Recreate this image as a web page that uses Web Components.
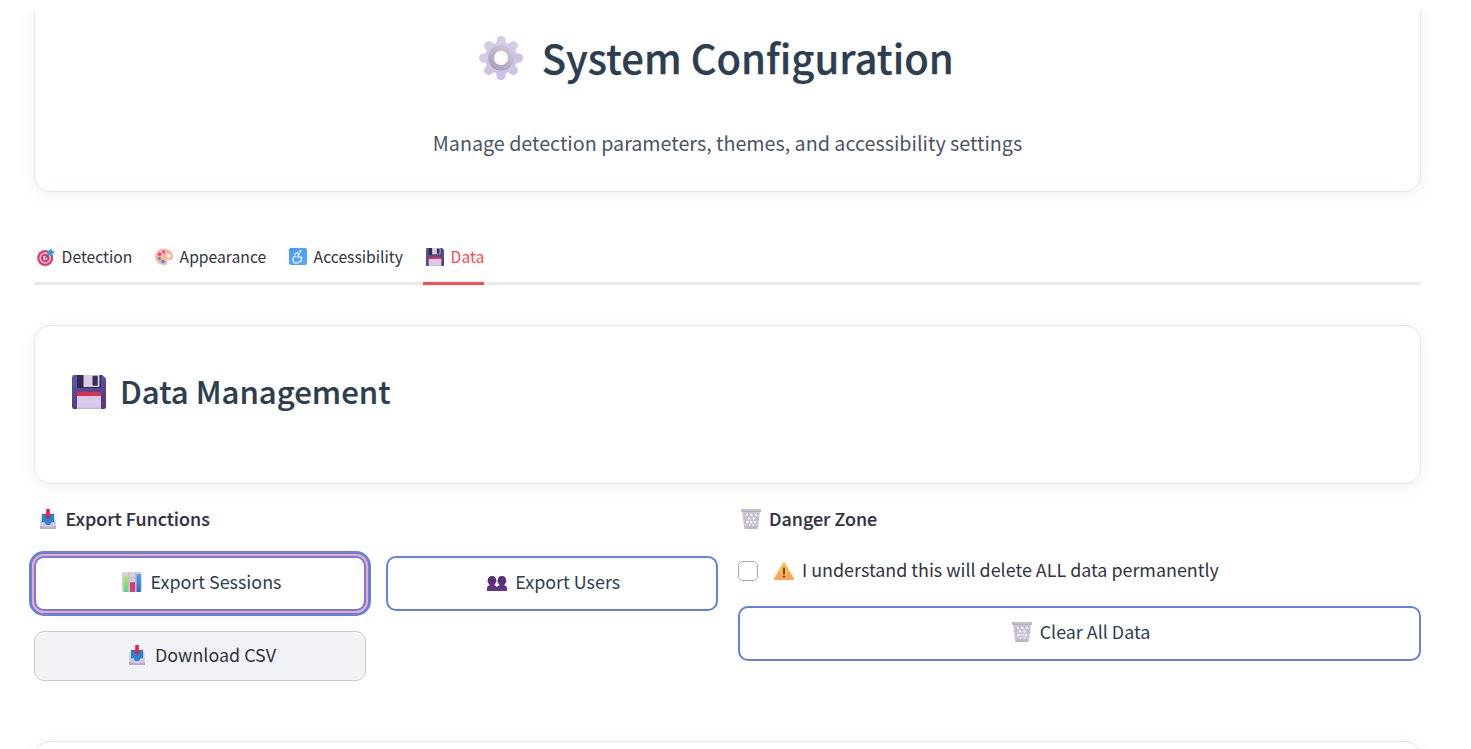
<!DOCTYPE html>
<html lang="en">
<head>
<meta charset="utf-8">
<title>System Configuration</title>
<style>
html,body{margin:0;height:100%;overflow:hidden;background:#fff}
body{font-family:"Noto Sans CJK SC","Noto Sans",sans-serif;color:#31333f}
</style>
</head>
<body>
<settings-page></settings-page>
<script>
const define=(name,html,setup)=>customElements.define(name,class extends HTMLElement{
  constructor(){
    super();
    const t=document.createElement('template');t.innerHTML=html;
    this.attachShadow({mode:'open'}).append(t.content.cloneNode(true));
  }
  connectedCallback(){if(setup)setup(this,this.shadowRoot)}
});

const icons={
gear:`<defs><linearGradient id="a" gradientUnits="userSpaceOnUse" x1="8" y1="4" x2="36" y2="42"><stop stop-color="#d9d0e6"/><stop offset="1" stop-color="#cbbde3"/></linearGradient><linearGradient id="b" gradientUnits="userSpaceOnUse" x1="30" y1="10" x2="14" y2="34"><stop stop-color="#d0c8d9"/><stop offset="1" stop-color="#aa9eb8"/></linearGradient></defs>
<g fill="url(#a)"><circle cx="22" cy="22" r="16"/><path d="M17.500 4Q18 0 22 0t4.500 4L28 14H16zM17.500 40Q18 44 22 44t4.500-4L28 30H16zM4 17.500Q0 18 0 22t4 4.500L14 28V16zM40 17.500Q44 18 44 22t-4 4.500L30 28V16z"/><path transform="rotate(45 22 22)" d="M17.500 4Q18 0 22 0t4.500 4L28 14H16zM17.500 40Q18 44 22 44t4.500-4L28 30H16zM4 17.500Q0 18 0 22t4 4.500L14 28V16zM40 17.500Q44 18 44 22t-4 4.500L30 28V16z"/></g>
<circle cx="22" cy="22" r="9.800" fill="none" stroke="url(#b)" stroke-width="5.800"/><circle cx="22" cy="22" r="7" fill="#fff"/>`,
target:`<circle cx="8.2" cy="10" r="8" fill="#e2386c"/><circle cx="8.2" cy="10" r="5.8" fill="#e7c9df"/><circle cx="8.2" cy="10" r="4.3" fill="#dc376b"/><circle cx="8.2" cy="10" r="2.3" fill="#ecc8dc"/><path d="M8 10.300l5-5" stroke="#345f9d" stroke-width="1.200"/><path d="M10.300 7.500L10.600 3.600 14.400.2l.5 2.600 3.100.6-3.600 3.900z" fill="#38a3ed"/><path d="M11.500 6.500l3.500-3.500" stroke="#1976c5" stroke-width=".7"/>`,
palette:`<path d="M8 .8C14 0 18 4 18 8.2c0 3.3-1.7 4.4-4.1 3.7-2-.6-2.7.5-2.1 2 .8 2-.2 3.2-2.1 3.1C4.2 16.8 0 13.4.2 8.6.3 4.5 3.4 1.3 8 .8z" fill="#ffb59c"/><circle cx="13.600" cy="7.800" r="1.900" fill="#fff"/><circle cx="8.700" cy="3.800" r="1.600" fill="#b653ee"/><circle cx="4.600" cy="6.200" r="1.600" fill="#ed3974"/><circle cx="4.400" cy="10.400" r="1.600" fill="#38afa9"/><circle cx="8" cy="13.500" r="1.700" fill="#388ee8"/>`,
access:`<defs><linearGradient id="a" x2=".5" y2="1"><stop stop-color="#4b99f4"/><stop offset="1" stop-color="#54a6ff"/></linearGradient></defs><rect width="18" height="17" rx="1.7" fill="url(#a)"/><g fill="none" stroke="#e7f4ff" stroke-width="1.300" stroke-linecap="round" stroke-linejoin="round"><circle cx="11.300" cy="3.300" r=".7" fill="#fff"/><path d="M5.500 6.500l2-1.700 2.800 1-1.800 3.300h4.200l-.8 4.400M6.800 8.200a3.500 3.500 0 1 0 3.600 5.200"/></g>`,
floppy:`<defs><linearGradient id="a" x2=".3" y2="1"><stop stop-color="#535fa8"/><stop offset="1" stop-color="#593978"/></linearGradient><linearGradient id="b" x2="1"><stop stop-color="#ef263c"/><stop offset="1" stop-color="#cf3768"/></linearGradient></defs><path d="M2 0h28.500L34 3.500V32a2 2 0 0 1-2 2H2a2 2 0 0 1-2-2V2a2 2 0 0 1 2-2z" fill="url(#a)"/><path d="M5 0h24v11.500a1.500 1.500 0 0 1-1.500 1.500h-21A1.500 1.500 0 0 1 5 11.500z" fill="#352758"/><path d="M11.500 0h16v12h-16z" fill="#d8cde0"/><rect x="20.500" y=".8" width="5.200" height="10" rx="1" fill="#3a285f"/><path d="M5 20h24v14H5z" fill="#d9c9e8"/><path d="M5 18.500q0-1.500 1.500-1.500h21q1.500 0 1.500 1.500V21H5z" fill="url(#b)"/><path d="M6 33.300h22" stroke="#c1a7d8"/>`,
inbox:`<path d="M1.700 4h12.600L16 14v5.500a.5.5 0 0 1-.5.500H.500a.5.500 0 0 1-.5-.5V14z" fill="#d5cee0"/><path d="M2 5h12v8.200h-2.600L10 16H6l-1.400-2.800H2z" fill="#2585d7"/><path d="M0 17.200l5 .3 1 .9h4l1-.9 5-.3V20H0z" fill="#bca6d2"/><path d="M6.200 0h3.600v6h2L8 10.500 4.200 6h2z" fill="#dd244e"/>`,
chart:`<defs><linearGradient id="a" x2="0" y2="1"><stop stop-color="#a9ed55"/><stop offset="1" stop-color="#53d794"/></linearGradient><linearGradient id="b" x2="0" y2="1"><stop stop-color="#43a6f0"/><stop offset="1" stop-color="#286bbd"/></linearGradient></defs><rect width="20" height="20" rx="1.800" fill="#d8cde1"/><path d="M0 6h20M0 13h20M7 0v20M13.500 0v20" stroke="#b9adc5" stroke-width=".7"/><path d="M1.800 4.500h4.400V20H1.800z" fill="url(#a)"/><path d="M8 10.300h5V20H8z" fill="#dc3974"/><path d="M14.500 2h4.200V20h-4.200z" fill="url(#b)"/>`,
users:`<defs><linearGradient id="a" x2="0" y2="1"><stop stop-color="#55306a"/><stop offset="1" stop-color="#63318f"/></linearGradient></defs><g fill="url(#a)"><path d="M5 0C8 0 9.300 1.700 9 4c.7.100.7 2.200-.2 2.500C8.400 8 7.600 8.500 7 9.200c1.800.3 3.200 1.300 3.200 2.800v3H0v-3c0-1.500 1.200-2.500 3-2.800C2.400 8.500 1.600 8 1.200 6.500.300 6.200.300 4.100 1 4 .7 1.700 2 0 5 0z"/><path transform="translate(9.900)" d="M5 0C8 0 9.300 1.700 9 4c.7.100.7 2.200-.2 2.500C8.400 8 7.600 8.500 7 9.200c1.800.3 3.100 1.300 3.100 2.800v3H0v-3c0-1.500 1.200-2.500 3-2.800C2.400 8.500 1.600 8 1.200 6.500.300 6.200.300 4.100 1 4 .7 1.700 2 0 5 0z"/></g>`,
trash:`<path d="M1 1.500h18l-2 17q-.2 1.500-1.700 1.500H4.700Q3.200 20 3 18.500z" fill="#cdc6d8"/><g fill="none" stroke="#aaa0b8" stroke-width=".5"><path d="M3 4l11 14M7 4l10 11M12 4l6 7M3.500 10l7 9M17 4L6 18M13 4L3 15M8 4l-5 6M17 9l-8 10"/></g><g fill="#f6f4f8"><circle cx="6" cy="6" r="1.200"/><circle cx="10.500" cy="6" r="1.200"/><circle cx="14.800" cy="6" r="1.200"/><circle cx="8" cy="9.500" r="1.200"/><circle cx="12.500" cy="9.500" r="1.200"/><circle cx="6.300" cy="13" r="1.200"/><circle cx="10.300" cy="13" r="1.200"/><circle cx="14" cy="13" r="1.200"/><circle cx="8.500" cy="16" r=".9"/><circle cx="12.300" cy="16" r=".9"/></g><path d="M3.500 17.500h13l-.3 2.500H3.800z" fill="#bdb4ca"/><rect y="0" width="20" height="3" rx="1" fill="#b6adc0"/><path d="M1.500 1h17" stroke="#d5ceda"/>`,
warn:`<defs><linearGradient id="a" x2="0" y2="1"><stop stop-color="#fcc641"/><stop offset="1" stop-color="#ffa058"/></linearGradient></defs><path d="M8.900.8q1.100-1.500 2.200 0l8.600 15.400q.8 1.800-1.100 1.800H1.400q-1.900 0-1.100-1.800z" fill="url(#a)"/><path d="M10 6.300v5.200" stroke="#4b4037" stroke-width="1.800" stroke-linecap="round"/><circle cx="10" cy="14.600" r="1.100" fill="#4b4037"/>`
};
const boxes={gear:[44,44],target:[18,18],palette:[18,17],access:[18,17],floppy:[34,34],inbox:[16,20],chart:[20,20],users:[20,15],trash:[20,20],warn:[20,18]};
define('emoji-icon',`<style>:host{display:block;flex:none;line-height:0}svg{display:block}</style><div></div>`,(h,r)=>{
  const n=h.getAttribute('name'),[w,t]=boxes[n],W=h.getAttribute('width')||w;
  r.querySelector('div').innerHTML=`<svg width="${W}" height="${t*W/w}" viewBox="0 0 ${w} ${t}">${icons[n]}</svg>`;
});

define('glass-card',`<style>:host{display:block;box-sizing:border-box;background:#fff;border:1px solid #e0e7ee;border-radius:16px;box-shadow:0 4px 20px rgba(0,0,0,.055)}</style><slot></slot>`);

define('tab-item',`<style>
:host{display:flex;box-sizing:border-box;width:var(--w);height:37px;padding-left:3px;gap:6.600px;font-size:15.700px;line-height:20px;white-space:nowrap;border-bottom:3px solid transparent}
:host([active]){color:#ff4b4b;border-color:#ff4b4b}
span{margin-top:-1px}
</style><div class="icon"></div><span><slot></slot></span>`,(h,r)=>{
  const i=document.createElement('emoji-icon');i.setAttribute('name',h.getAttribute('icon'));i.setAttribute('width',18);
  r.querySelector('.icon').append(i);
});

define('action-button',`<style>
:host{display:block}
button{all:unset;box-sizing:border-box;display:flex;align-items:center;justify-content:center;gap:var(--gap,9px);width:100%;height:55px;padding:0 0 3px 3px;border:2px solid #667eea;border-radius:10px;color:#2c3e50;background:#fff;font-size:17.900px;line-height:26px;white-space:nowrap}
span{margin-top:-2px}
:host([focused]) button{box-shadow:0 0 0 2px #ffa5a5;outline:3px solid #667eea;outline-offset:2px}
:host([plain]) button{height:50px;padding:0 0 3px 5px;border:1px solid #c9cad1;background:#f0f2f6;color:#31333f;gap:10px}
:host([plain]) span{margin-top:-1px}
</style><button><slot name="icon"></slot><span><slot></slot></span></button>`);

define('section-label',`<style>:host{display:flex;align-items:center;height:24px;font-size:17.900px;line-height:24px;font-weight:500;-webkit-text-stroke:.15px currentColor;white-space:nowrap}</style><slot></slot>`);

define('confirm-box',`<style>:host{display:flex;align-items:center;height:24px;font-size:17.900px;line-height:24px;white-space:nowrap}
i{box-sizing:border-box;width:20px;height:20px;border:1px solid #a9aab0;border-radius:5px;margin-right:16px}span{margin:-4px 0 0 8px}</style><i></i><emoji-icon name="warn"></emoji-icon><span><slot></slot></span>`);

define('settings-page',`<style>
:host{display:block;box-sizing:border-box;height:749px;padding-top:11px;overflow:hidden}
.clip{height:738px;overflow:hidden;padding:0 50px 0 34px}
.hero{height:221px;margin-top:-40px;padding-top:63px;display:flex;flex-direction:column;align-items:center}
h1,h2,p{margin:0;white-space:nowrap;color:#2c3e50;font-weight:500}
h1{display:flex;gap:18.500px;font-size:40px;line-height:44px;height:93px;padding-right:22px;-webkit-text-stroke:.25px currentColor}
h1 emoji-icon{margin-top:1px}
p{font-weight:400;font-size:19.720px;line-height:30px;color:#4a5568}
nav{display:flex;gap:20px;height:37px;margin-top:56px;box-shadow:inset 0 -3px #eaeaeb}
.data{height:159px;margin-top:40px;padding:43px 37px}
h2{display:flex;gap:14px;font-size:31.150px;line-height:44px;-webkit-text-stroke:.2px currentColor}
h2 emoji-icon{margin-top:6px}
.cols{display:grid;grid-template-columns:684px 683px;gap:20px;margin-top:23px}
.btns{display:grid;grid-template-columns:332px 332px;gap:20px;margin-top:25px}
.left section-label{padding-left:6px;gap:9.500px}
.right section-label{padding-left:3px;gap:8px}
section-label span{margin-top:-2px}
confirm-box{margin-top:28px}
.right action-button{margin-top:23px}
.next{height:100px;margin-top:60px}
</style>
<div class="clip">
<glass-card class="hero"><h1><emoji-icon name="gear"></emoji-icon><span>System Configuration</span></h1><p>Manage detection parameters, themes, and accessibility settings</p></glass-card>
<nav>
<tab-item icon="target" style="--w:98px">Detection</tab-item>
<tab-item icon="palette" style="--w:114px">Appearance</tab-item>
<tab-item icon="access" style="--w:117px">Accessibility</tab-item>
<tab-item icon="floppy" active style="--w:61px">Data</tab-item>
</nav>
<glass-card class="data"><h2><emoji-icon name="floppy"></emoji-icon><span>Data Management</span></h2></glass-card>
<div class="cols">
<div class="left"><section-label><emoji-icon name="inbox"></emoji-icon><span>Export Functions</span></section-label>
<div class="btns">
<action-button focused><emoji-icon slot="icon" name="chart"></emoji-icon>Export Sessions</action-button>
<action-button style="--gap:8.500px"><emoji-icon slot="icon" name="users" style="margin-top:3px"></emoji-icon>Export Users</action-button>
<action-button plain><emoji-icon slot="icon" name="inbox"></emoji-icon>Download CSV</action-button>
</div></div>
<div class="right"><section-label><emoji-icon name="trash"></emoji-icon><span>Danger Zone</span></section-label>
<confirm-box>I understand this will delete ALL data permanently</confirm-box>
<action-button style="--gap:8px"><emoji-icon slot="icon" name="trash"></emoji-icon>Clear All Data</action-button></div>
</div>
<glass-card class="next"></glass-card>
</div>`);
</script>
</body>
</html>
